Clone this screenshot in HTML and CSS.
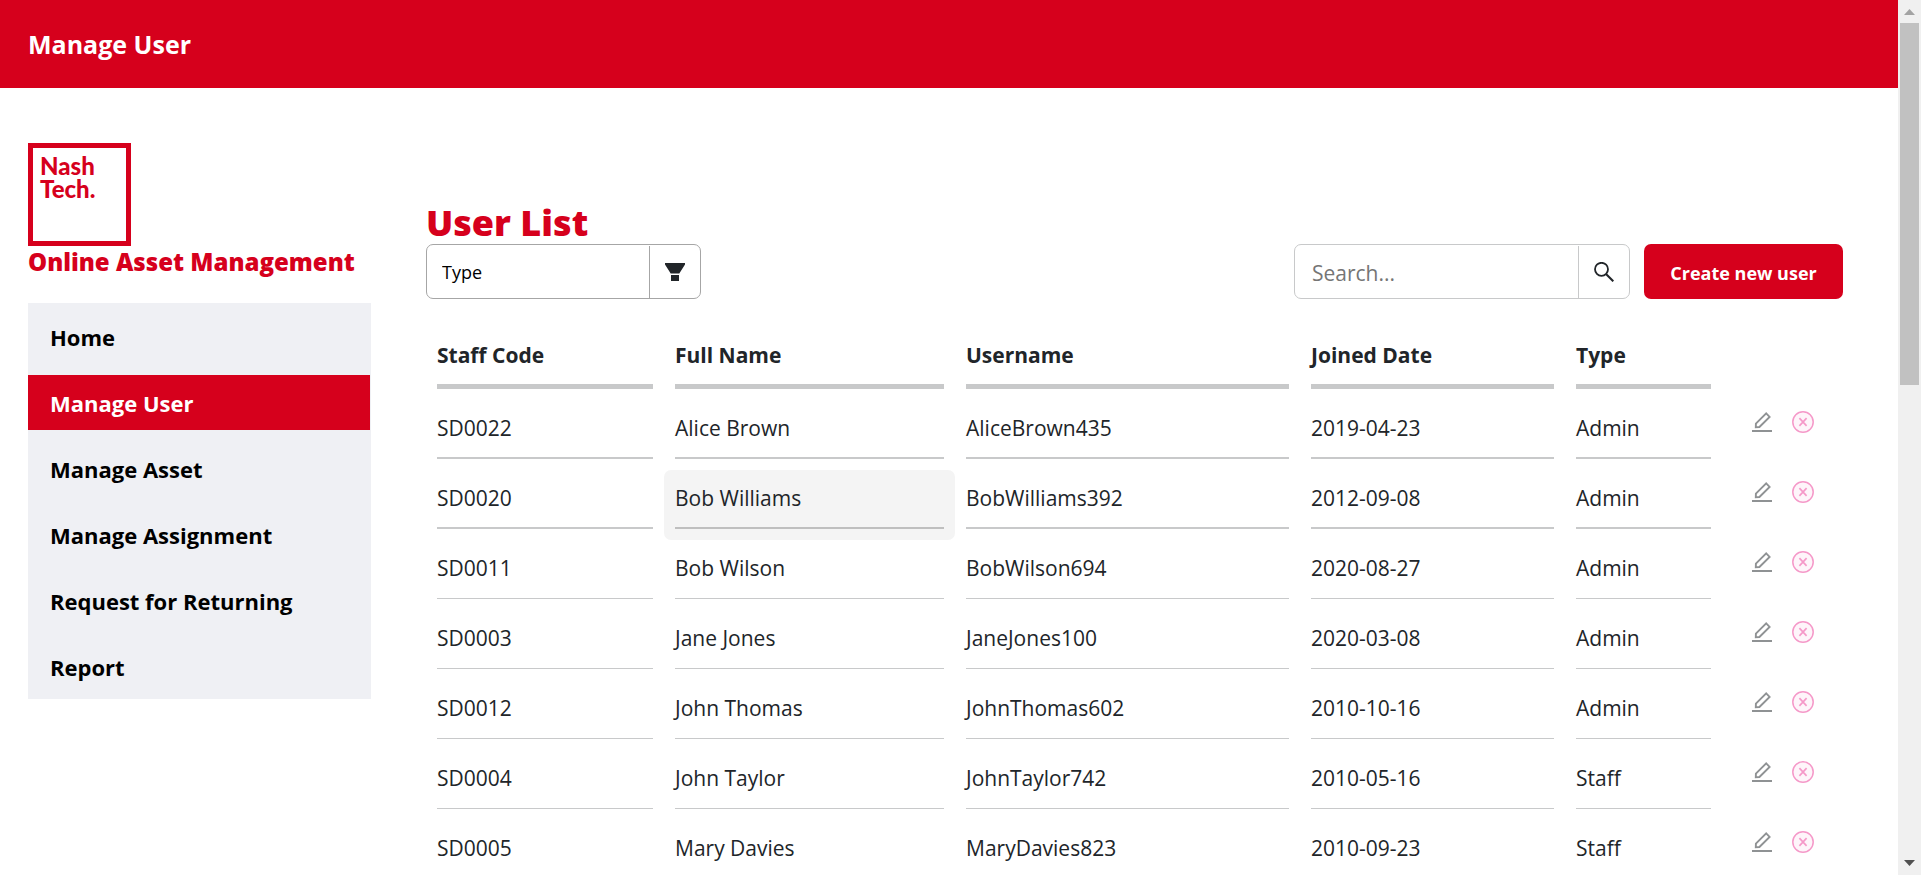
FILE: index.html
```html
<!DOCTYPE html>
<html lang="en">
<head>
<meta charset="utf-8">
<meta name="viewport" content="width=device-width, initial-scale=1">
<title>Manage User</title>
<link rel="stylesheet" href="styles.css">
</head>
<body>
<svg class="sprite" aria-hidden="true">
  <symbol id="edit" viewBox="0 0 20 20">
    <path d="M14.2 1.4 17.6 4.9 7.4 15 3.8 15.2 3.9 11.6Z" fill="none" stroke="#8f9294" stroke-width="1.9"/>
    <path d="M0 19h20" stroke="#8f9294" stroke-width="2"/>
  </symbol>
  <symbol id="remove" viewBox="0 0 22 22">
    <circle cx="11" cy="11" r="10.2" fill="#fef5fa" stroke="#f599c9" stroke-width="1.5"/>
    <path d="M7.4 7.2l7.2 7.6M14.6 7.2l-7.2 7.6" stroke="#f599c9" stroke-width="1.7"/>
  </symbol>
</svg>
<div class="window">
  <div class="page">
    <header class="topbar"><h1>Manage User</h1></header>
    <div class="layout">
      <aside class="sidebar">
        <div class="logo"><span>Nash</span><span>Tech.</span></div>
        <p class="product">Online Asset Management</p>
        <nav class="menu">
          <a href="#">Home</a>
          <a href="#" class="active" aria-current="page">Manage User</a>
          <a href="#">Manage Asset</a>
          <a href="#">Manage Assignment</a>
          <a href="#">Request for Returning</a>
          <a href="#">Report</a>
        </nav>
      </aside>
      <main class="content">
        <h2>User List</h2>
        <div class="toolbar">
          <div class="field filter">
            <select aria-label="Type"><option>Type</option></select>
            <button type="button" aria-label="Filter">
              <svg width="20" height="18" viewBox="0 0 20 18"><path d="M0 0h20v1.5L14.3 10.5H5.7L0 1.5ZM6 12h8v6H6Z" fill="#212529"/></svg>
            </button>
          </div>
          <div class="field search">
            <input type="text" placeholder="Search..." aria-label="Search">
            <button type="button" aria-label="Search">
              <svg width="20" height="20" viewBox="0 0 20 20" fill="none" stroke="#212529"><circle cx="7.5" cy="7.3" r="6.5" stroke-width="1.8"/><path d="M12 12l7.3 7.3" stroke-width="2.1"/></svg>
            </button>
          </div>
          <button type="button" class="create">Create new user</button>
        </div>
        <table>
          <colgroup><col class="c-code"><col class="c-name"><col class="c-user"><col class="c-date"><col class="c-type"><col class="c-act"></colgroup>
          <thead>
            <tr><th><span>Staff Code</span></th><th><span>Full Name</span></th><th><span>Username</span></th><th><span>Joined Date</span></th><th><span>Type</span></th><td></td></tr>
          </thead>
          <tbody>
            <tr class="strong"><td><span>SD0022</span></td><td><span>Alice Brown</span></td><td><span>AliceBrown435</span></td><td><span>2019-04-23</span></td><td><span>Admin</span></td><td class="actions"><div><button type="button" aria-label="Edit"><svg width="20" height="20"><use href="#edit"/></svg></button><button type="button" aria-label="Disable"><svg width="22" height="22"><use href="#remove"/></svg></button></div></td></tr>
            <tr class="strong"><td><span>SD0020</span></td><td class="hover"><span>Bob Williams</span></td><td><span>BobWilliams392</span></td><td><span>2012-09-08</span></td><td><span>Admin</span></td><td class="actions"><div><button type="button" aria-label="Edit"><svg width="20" height="20"><use href="#edit"/></svg></button><button type="button" aria-label="Disable"><svg width="22" height="22"><use href="#remove"/></svg></button></div></td></tr>
            <tr><td><span>SD0011</span></td><td><span>Bob Wilson</span></td><td><span>BobWilson694</span></td><td><span>2020-08-27</span></td><td><span>Admin</span></td><td class="actions"><div><button type="button" aria-label="Edit"><svg width="20" height="20"><use href="#edit"/></svg></button><button type="button" aria-label="Disable"><svg width="22" height="22"><use href="#remove"/></svg></button></div></td></tr>
            <tr><td><span>SD0003</span></td><td><span>Jane Jones</span></td><td><span>JaneJones100</span></td><td><span>2020-03-08</span></td><td><span>Admin</span></td><td class="actions"><div><button type="button" aria-label="Edit"><svg width="20" height="20"><use href="#edit"/></svg></button><button type="button" aria-label="Disable"><svg width="22" height="22"><use href="#remove"/></svg></button></div></td></tr>
            <tr><td><span>SD0012</span></td><td><span>John Thomas</span></td><td><span>JohnThomas602</span></td><td><span>2010-10-16</span></td><td><span>Admin</span></td><td class="actions"><div><button type="button" aria-label="Edit"><svg width="20" height="20"><use href="#edit"/></svg></button><button type="button" aria-label="Disable"><svg width="22" height="22"><use href="#remove"/></svg></button></div></td></tr>
            <tr><td><span>SD0004</span></td><td><span>John Taylor</span></td><td><span>JohnTaylor742</span></td><td><span>2010-05-16</span></td><td><span>Staff</span></td><td class="actions"><div><button type="button" aria-label="Edit"><svg width="20" height="20"><use href="#edit"/></svg></button><button type="button" aria-label="Disable"><svg width="22" height="22"><use href="#remove"/></svg></button></div></td></tr>
            <tr><td><span>SD0005</span></td><td><span>Mary Davies</span></td><td><span>MaryDavies823</span></td><td><span>2010-09-23</span></td><td><span>Staff</span></td><td class="actions"><div><button type="button" aria-label="Edit"><svg width="20" height="20"><use href="#edit"/></svg></button><button type="button" aria-label="Disable"><svg width="22" height="22"><use href="#remove"/></svg></button></div></td></tr>
          </tbody>
        </table>
      </main>
    </div>
  </div>
  <div class="scrollbar" aria-hidden="true">
    <svg width="11" height="6" viewBox="0 0 11 6"><path d="M0 6 5.5 0 11 6Z" fill="#a3a3a3"/></svg>
    <div class="track"><div class="thumb"></div></div>
    <svg width="11" height="6" viewBox="0 0 11 6"><path d="M0 0 5.5 6 11 0Z" fill="#505050"/></svg>
  </div>
</div>
</body>
</html>
```
FILE: styles.css
```css
* { box-sizing: border-box; }

body {
  margin: 0;
  background: #fff;
  color: #212529;
  font-family: "Segoe UI", "Open Sans", "Noto Sans", sans-serif;
  font-size: 21px;
  line-height: 32px;
}

h1, h2, p { margin: 0; }

button, input, select {
  font-family: inherit;
  color: inherit;
  border: 0;
  padding: 0;
  background: none;
}

svg { display: block; }
.sprite { display: none; }

.window { display: flex; height: 100vh; overflow: hidden; }
.page { flex: 1; min-width: 0; overflow: hidden; }

.topbar {
  display: flex;
  align-items: center;
  height: 88px;
  padding: 0 28px;
  background: #d6001c;
  color: #fff;
}
.topbar h1 { font-size: 25px; font-weight: 700; }

.layout { display: flex; gap: 55px; padding: 55px 55px 0 28px; }

.sidebar { flex: 0 0 343px; }
.logo {
  width: 103px;
  height: 103px;
  padding: 6px 7px;
  border: 5px solid #d6001c;
  color: #d6001c;
  font-family: Lato, sans-serif;
  font-size: 24px;
  line-height: 23px;
  font-weight: 900;
}
.logo span { display: block; }
.product {
  margin-bottom: 25px;
  color: #d6001c;
  font-size: 24px;
  font-weight: 800;
  white-space: nowrap;
}
.menu {
  display: flex;
  flex-direction: column;
  gap: 11px;
  padding: 6px 1px 5px 0;
  background: #eff0f4;
}
.menu a {
  padding: 12px 22px 11px;
  color: #000;
  font-size: 22px;
  font-weight: 700;
  text-decoration: none;
}
.menu a.active { background: #d6001c; color: #fff; }

.content { flex: 1; min-width: 0; padding-top: 58px; }
.content h2 {
  color: #d6001c;
  font-size: 36px;
  line-height: 43px;
  font-weight: 800;
}

.toolbar { display: flex; gap: 14px; height: 55px; }
.field {
  display: flex;
  border: 1px solid #c8c9ca;
  border-radius: 7px;
}
.field button {
  display: flex;
  align-items: center;
  justify-content: center;
  width: 51px;
  margin-top: 1px;
  border-left: 1px solid #c8c9ca;
}
.filter, .filter button { border-color: #a6a6a6; }
.filter { width: 275px; margin-right: auto; }
.filter select {
  flex: 1;
  padding: 0 15px;
  appearance: none;
  color: #000;
  font-size: 18px;
  font-weight: 500;
}
.search { width: 336px; }
.search input {
  flex: 1;
  min-width: 0;
  padding: 2px 17px 0;
  font-size: 21px;
}
.search input::placeholder { color: #757575; opacity: 1; }
.create {
  width: 199px;
  padding-top: 2px;
  border-radius: 7px;
  background: #d6001c;
  color: #fff;
  font-size: 18px;
  font-weight: 700;
}

table {
  width: 100%;
  margin-top: 29px;
  table-layout: fixed;
  border-collapse: separate;
  border-spacing: 0;
}
.c-code { width: 238px; }
.c-name { width: 291px; }
.c-user { width: 345px; }
.c-date { width: 265px; }
.c-type { width: 157px; }
.c-act { width: 121px; }

th, td { padding: 11px; text-align: left; vertical-align: top; }
th { font-weight: 700; }
th span, td span { display: block; height: 48px; }
th span { height: 50px; border-bottom: 5px solid #c8c9ca; }
td span { padding-top: 1px; border-bottom: 1px solid #c8c9ca; }
.strong span { border-bottom-width: 2px; }
td.hover { border-radius: 7px; background: #f4f4f4; }
.hover span { border-color: #bfbfbf; }
.actions div { display: flex; align-items: center; gap: 20px; padding-left: 19px; }

.scrollbar {
  display: flex;
  flex-direction: column;
  align-items: center;
  flex: 0 0 23px;
  padding: 9px 2px;
  background: #f0f0f0;
}
.track { flex: 1; width: 100%; padding: 8px 0; }
.thumb { height: 43.7%; background: #c1c1c1; }
```
